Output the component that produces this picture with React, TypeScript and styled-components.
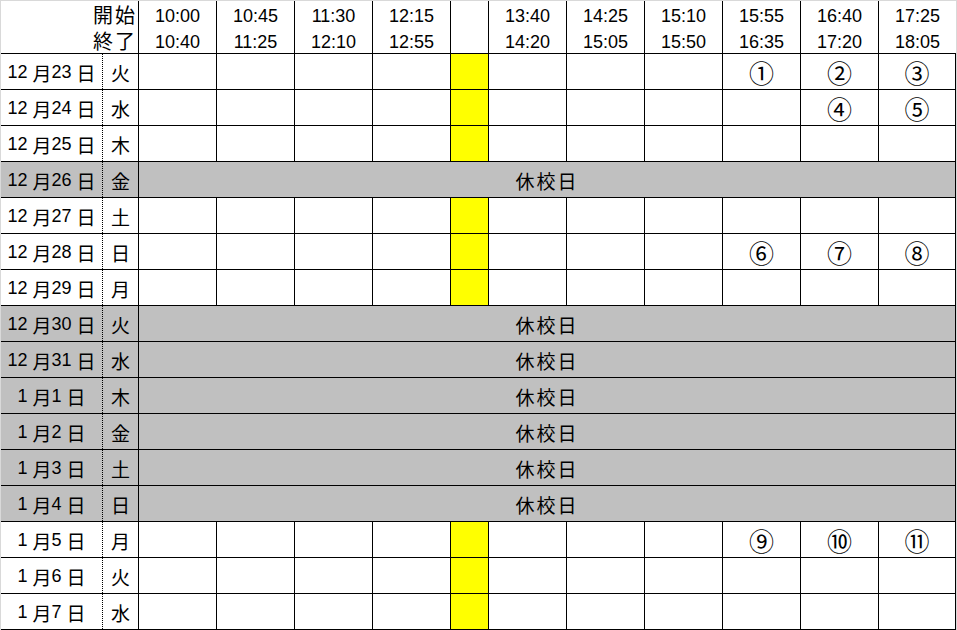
import React from 'react';
import styled, { createGlobalStyle } from 'styled-components';

const SLOTS = [
  ['10:00', '10:40'],
  ['10:45', '11:25'],
  ['11:30', '12:10'],
  ['12:15', '12:55'],
  null,
  ['13:40', '14:20'],
  ['14:25', '15:05'],
  ['15:10', '15:50'],
  ['15:55', '16:35'],
  ['16:40', '17:20'],
  ['17:25', '18:05'],
];

type Day = {
  month: number;
  day: number;
  weekday: string;
  holiday?: boolean;
  marks?: Record<number, string>;
};

const DAYS: Day[] = [
  { month: 12, day: 23, weekday: '火', marks: { 8: '①', 9: '②', 10: '③' } },
  { month: 12, day: 24, weekday: '水', marks: { 9: '④', 10: '⑤' } },
  { month: 12, day: 25, weekday: '木' },
  { month: 12, day: 26, weekday: '金', holiday: true },
  { month: 12, day: 27, weekday: '土' },
  { month: 12, day: 28, weekday: '日', marks: { 8: '⑥', 9: '⑦', 10: '⑧' } },
  { month: 12, day: 29, weekday: '月' },
  { month: 12, day: 30, weekday: '火', holiday: true },
  { month: 12, day: 31, weekday: '水', holiday: true },
  { month: 1, day: 1, weekday: '木', holiday: true },
  { month: 1, day: 2, weekday: '金', holiday: true },
  { month: 1, day: 3, weekday: '土', holiday: true },
  { month: 1, day: 4, weekday: '日', holiday: true },
  { month: 1, day: 5, weekday: '月', marks: { 8: '⑨', 9: '⑩', 10: '⑪' } },
  { month: 1, day: 6, weekday: '火' },
  { month: 1, day: 7, weekday: '水' },
];

const slotWidth = (idx: number) =>
  SLOTS[idx] === null ? 38 : idx === SLOTS.length - 1 ? 77 : 78;

export default function App() {
  return (
    <>
      <GlobalStyle />
      <S_Sheet>
        <S_HeaderRow>
          <S_LabelHead>
            <span>開始</span>
            <span>終了</span>
          </S_LabelHead>
          {SLOTS.map((slot, idx) => (
            <S_TimeHead
              key={idx}
              $width={slotWidth(idx)}
              $last={idx === SLOTS.length - 1}
            >
              {slot && (
                <>
                  <span>{slot[0]}</span>
                  <span>{slot[1]}</span>
                </>
              )}
            </S_TimeHead>
          ))}
        </S_HeaderRow>
        {DAYS.map(d => (
          <S_Row key={`${d.month}-${d.day}`} $holiday={!!d.holiday}>
            <S_DateCell>
              <S_Num>{d.month}</S_Num>
              <S_Kanji>月</S_Kanji>
              <S_Num>{d.day}</S_Num>
              <S_Kanji>日</S_Kanji>
            </S_DateCell>
            <S_DayCell>{d.weekday}</S_DayCell>
            {d.holiday ? (
              <S_HolidayCell>休校日</S_HolidayCell>
            ) : (
              SLOTS.map((slot, idx) =>
                slot === null ? (
                  <S_LunchCell key={idx} />
                ) : (
                  <S_SlotCell key={idx} $width={slotWidth(idx)}>
                    {d.marks?.[idx] && <S_Mark>{d.marks[idx]}</S_Mark>}
                  </S_SlotCell>
                )
              )
            )}
          </S_Row>
        ))}
      </S_Sheet>
    </>
  );
}

const GlobalStyle = createGlobalStyle`
  body {
    margin: 0;
    background: #fff;
    font-family: "Liberation Sans", "Noto Sans CJK JP", sans-serif;
    font-size: 18px;
    color: #000;
  }
  * {
    box-sizing: border-box;
  }
`;

const S_Sheet = styled.div`
  width: 957px;
  border-top: 1px solid #d9d9d9;
  border-left: 1px solid #d9d9d9;
  border-right: 1px solid #d9d9d9;
`;

const S_HeaderRow = styled.div`
  display: flex;
  height: 53px;
  border-bottom: 1px solid #000;
`;

const S_LabelHead = styled.div`
  width: 138px;
  display: flex;
  flex-flow: column;
  align-items: flex-end;
  padding: 2px 1px 0 0;
  font-size: 20px;
  letter-spacing: 2px;
  line-height: 26px;
  border-right: 1px solid #000;
`;

const S_TimeHead = styled.div<{ $width: number; $last: boolean }>`
  width: ${({ $width }) => $width}px;
  display: flex;
  flex-flow: column;
  align-items: center;
  padding-top: 2px;
  line-height: 26px;
  border-right: ${({ $last }) => ($last ? 'none' : '1px solid #000')};
`;

const S_Row = styled.div<{ $holiday: boolean }>`
  display: flex;
  height: 36px;
  border-bottom: 1px solid #000;
  background: ${({ $holiday }) => ($holiday ? '#c0c0c0' : '#fff')};
`;

const S_Cell = styled.div`
  display: flex;
  align-items: center;
  justify-content: center;
  padding-top: 2px;
  border-right: 1px solid #000;
`;

const S_DateCell = styled(S_Cell)`
  width: 102px;
  border-right: 1px dotted #000;
`;

const S_Num = styled.span`
  margin-right: 5px;
`;

const S_Kanji = styled.span`
  font-size: 19px;
`;

const S_DayCell = styled(S_Cell)`
  width: 36px;
  font-size: 19px;
`;

const S_SlotCell = styled(S_Cell)<{ $width: number }>`
  width: ${({ $width }) => $width}px;
`;

const S_Mark = styled.span`
  font-family: "Noto Sans CJK JP", sans-serif;
  font-size: 25px;
  line-height: 1;
`;

const S_LunchCell = styled(S_Cell)`
  width: 38px;
  background: #ffff00;
`;

const S_HolidayCell = styled(S_Cell)`
  flex: 1;
  font-size: 19px;
  letter-spacing: 2px;
`;
